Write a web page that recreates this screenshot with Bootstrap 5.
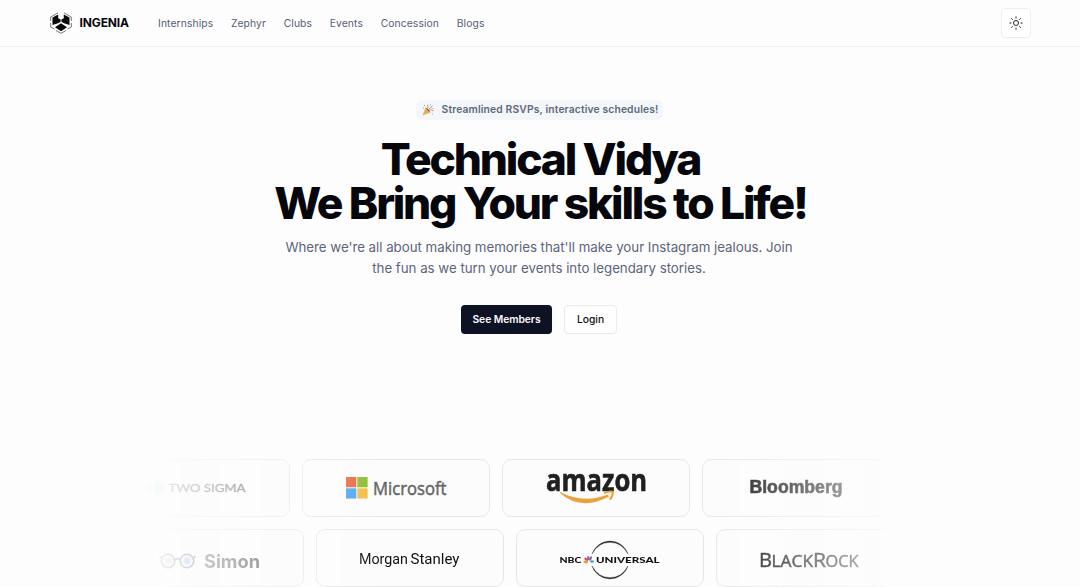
<!DOCTYPE html>
<html lang="en">
<head>
<meta charset="utf-8">
<meta name="viewport" content="width=device-width, initial-scale=1">
<title>Ingenia</title>
<link href="https://cdn.jsdelivr.net/npm/bootstrap@5.3.0/dist/css/bootstrap.min.css" rel="stylesheet">
<style>
body{font-family:Inter,sans-serif;background:#fdfdfe;color:#05070d;height:587px;overflow:hidden}
.topbar{height:47px;border-bottom:1px solid #f0f0f2;padding:0 49px 0 50px}
.brand-name{font-size:12px;font-weight:700;color:#05070d;margin-left:7.5px;width:78.5px;line-height:18px;letter-spacing:-.12px}
.menu{gap:17.7px}
.menu .nav-link{padding:0;font-size:10.3px;line-height:16px;color:#565e76;letter-spacing:.11px}
.theme-btn{width:30px;height:30px;border:1px solid #ededf0;border-radius:5px;background:#fff;padding:0}
.hero{padding-top:53px}
.pill{height:20px;border-radius:6px;background:#f3f6fa;color:#5f6979;font-size:10.3px;font-weight:600;padding:0 5px 0 6px;letter-spacing:.14px;margin-right:1px}
.headline{font-size:44.4px;line-height:44.4px;font-weight:800;letter-spacing:-2.2px;margin:17px 0 0 1px}
.sub{font-size:13.3px;line-height:20.7px;color:#5d657a;margin:11px 2px 0 0;letter-spacing:-.02px}
.actions{gap:12px;margin-top:27px;margin-right:2px}
.actions .btn{height:29px;font-size:10.3px;line-height:16px;font-weight:500;border-radius:4px;padding:5px 0}
.actions .btn-main{width:91px;background:#0d1224;color:#fafafc;font-weight:600;letter-spacing:-.05px}
.actions .btn-line{width:53px;border:1px solid #ebebef;background:#fefefe;color:#111}
.logos{width:800px;margin:125px auto 0;overflow:hidden;-webkit-mask-image:linear-gradient(90deg,transparent,#000 30%,#000 70%,rgba(0,0,0,.32) 91%,transparent 94%);mask-image:linear-gradient(90deg,transparent,#000 30%,#000 70%,rgba(0,0,0,.32) 91%,transparent 94%)}
.track{gap:12px}
.track-one{margin-left:-38.5px}
.track-two{margin-left:-24px;margin-top:12px}
.tile{flex:0 0 188px;height:58px;border:1px solid #e7e7ea;border-radius:9px;background:#fcfcfc}
.tile svg{display:block;width:100%;height:56px}
</style>
<script src="https://cdn.jsdelivr.net/npm/bootstrap@5.3.0/dist/js/bootstrap.bundle.min.js"></script>
</head>
<body>
<header class="topbar d-flex align-items-center">
  <a href="#" class="d-flex align-items-center text-decoration-none">
    <svg width="22" height="22" viewBox="0 0 22 22"><path d="M2.5 5.4 8.2 2.5V6.2L10.6 7.5V9.7L8 11.2 2.5 13ZM19.5 5.4 13.8 2.5V6.2L11.4 7.5V9.7L14 11.2 19.5 13ZM5 15.2l6-4 6 4-6 4z" fill="#0a0a0a"/><path d="M.7 9V5L8 .8M21.3 9V5L14 .8M.7 11v4l3.8 2M21.3 11v4l-3.8 2M6 18.5l5 2.8 5-2.8" fill="none" stroke="#555" stroke-width=".8"/></svg>
    <span class="brand-name">INGENIA</span>
  </a>
  <nav class="menu nav flex-nowrap">
    <a class="nav-link" href="#">Internships</a><a class="nav-link" href="#">Zephyr</a><a class="nav-link" href="#">Clubs</a><a class="nav-link" href="#">Events</a><a class="nav-link" href="#">Concession</a><a class="nav-link" href="#">Blogs</a>
  </nav>
  <button class="theme-btn btn d-flex align-items-center justify-content-center ms-auto" aria-label="Theme">
    <svg width="14" height="14" viewBox="0 0 14 14" fill="none" stroke="#222" stroke-width="1"><circle cx="7" cy="7" r="2.5"/><path d="M7 .4v2M7 11.6v2M.4 7h2M11.6 7h2M2.3 2.3l1.4 1.4M10.3 10.3l1.4 1.4M2.3 11.7l1.4-1.4M10.3 3.7l1.4-1.4"/></svg>
  </button>
</header>
<main>
  <section class="hero d-flex flex-column align-items-center text-center">
    <div class="pill d-flex align-items-center">
      <svg class="me-2" width="12" height="12" viewBox="0 0 12 12"><path d="M.5 11.5 3.5 3.5 8.5 8.5Z" fill="#e9ae50"/><path d="M3.5 3.5q3 1 5 5-3-1-5-5" fill="#8b5b35"/><path d="M5 5Q7 3 5.5.8M7 6.5Q9 4.5 11.5 7" fill="none" stroke="#c79a5c"/><path d="M6.5 5.5 10.5 2" stroke="#6f9ac7"/><path d="M2 1.5h1M8 1h1M10.5 4.5h1M10 10h1M1 4h1" stroke="#d29855"/></svg>
      <span>Streamlined RSVPs, interactive schedules!</span>
    </div>
    <h1 class="headline">Technical Vidya<br>We Bring Your skills to Life!</h1>
    <p class="sub">Where we're all about making memories that'll make your Instagram jealous. Join<br>the fun as we turn your events into legendary stories.</p>
    <div class="actions d-flex"><a class="btn btn-main" href="#">See Members</a><a class="btn btn-line" href="#">Login</a></div>
  </section>
  <section class="logos">
    <div class="track track-one d-flex">
      <div class="tile"><svg viewBox="0 0 186 56"><path d="m53 19 9 9-9 9-9-9z" fill="#a8d8d0"/><text x="65.5" y="32" font-family="Lato" font-size="12" fill="#444" stroke="#444" stroke-width=".3" textLength="77" lengthAdjust="spacingAndGlyphs">TWO SIGMA</text></svg></div>
      <div class="tile"><svg viewBox="0 0 186 56"><path d="M43 17h10.3v10.3H43z" fill="#e86740"/><path d="M54.3 17h10.3v10.3H54.3z" fill="#8fbc30"/><path d="M43 28.3h10.3v10.3H43z" fill="#49a5ed"/><path d="M54.3 28.3h10.3v10.3H54.3z" fill="#f4bd42"/><text x="70" y="34.5" font-family="Open Sans" font-size="17.5" fill="#666" stroke="#666" stroke-width=".5" textLength="73.5" lengthAdjust="spacingAndGlyphs">Microsoft</text></svg></div>
      <div class="tile"><svg viewBox="0 0 186 56"><text x="43" y="30.5" font-family="Open Sans" font-size="30" font-weight="700" fill="#202020" stroke="#202020" stroke-width=".6" textLength="101" lengthAdjust="spacingAndGlyphs">amazon</text><path d="M57 32Q80 44 105 34.5L106 36.5Q78 51.5 57 33Z" fill="#eba13b"/><path d="M101 33q7-2.5 9-.8 0 3.5-3 7.3" fill="none" stroke="#eba13b" stroke-width="2.2"/></svg></div>
      <div class="tile"><svg viewBox="0 0 186 56"><text x="46.5" y="33" font-family="Liberation Sans" font-size="19" font-weight="700" fill="#111" stroke="#111" stroke-width=".6" textLength="93" lengthAdjust="spacingAndGlyphs">Bloomberg</text></svg></div>
    </div>
    <div class="track track-two d-flex">
      <div class="tile"><svg viewBox="0 0 186 56"><g fill="#d4e4f2" stroke="#444" stroke-width="1.5"><circle cx="51" cy="31" r="6.8"/><circle cx="70" cy="31" r="6.8"/><path d="M58 29.5q2.5-1.5 5 0M44.5 28l-2-2M76.5 28l2-2" fill="none"/></g><circle cx="51" cy="31" r="3" fill="#a9c6df"/><circle cx="70" cy="31" r="3" fill="#6e9fcb"/><text x="87" y="38" font-family="Inter" font-size="18.5" font-weight="700" fill="#444" textLength="56" lengthAdjust="spacingAndGlyphs">Simon</text></svg></div>
      <div class="tile"><svg viewBox="0 0 186 56"><text x="42" y="34" font-family="Roboto" font-size="15.5" fill="#111" textLength="49" lengthAdjust="spacingAndGlyphs">Morgan</text><text x="93.5" y="34" font-family="Roboto" font-size="15.5" fill="#111" textLength="49" lengthAdjust="spacingAndGlyphs">Stanley</text></svg></div>
      <div class="tile"><svg viewBox="0 0 186 56"><path d="M75 24A19 19 0 0 1 111 24Q105 12.5 93 12.3 81 12.5 75 24M75 36A19 19 0 0 0 111 36Q105 47.5 93 47.7 81 47.5 75 36" fill="#222" stroke="#333" stroke-width=".4"/><text x="42.5" y="33" font-family="Lato" font-size="8.2" font-weight="900" fill="#111" textLength="22" lengthAdjust="spacingAndGlyphs">NBC</text><g><ellipse cx="68.8" cy="32" rx="2.4" ry="1.4" fill="#e8a33b"/><ellipse cx="69.3" cy="29.2" rx="2.3" ry="1.3" transform="rotate(35 69.3 29.2)" fill="#d95349"/><ellipse cx="71.3" cy="28" rx="1.2" ry="2" fill="#b75190"/><ellipse cx="73.5" cy="28.5" rx="1.2" ry="2.3" transform="rotate(30 73.5 28.5)" fill="#6574b7"/><ellipse cx="75" cy="31.5" rx="2" ry="1.3" fill="#519dcc"/></g><text x="79" y="33" font-family="Lato" font-size="8.2" font-weight="900" fill="#111" textLength="63.5" lengthAdjust="spacingAndGlyphs">UNIVERSAL</text></svg></div>
      <div class="tile"><svg viewBox="0 0 186 56"><g font-family="Open Sans" fill="#111" stroke="#111" stroke-width=".45"><text x="42" y="37" font-size="20" textLength="13" lengthAdjust="spacingAndGlyphs">B</text><text x="54.5" y="37" font-size="16" textLength="41.5" lengthAdjust="spacingAndGlyphs">LACK</text><text x="96" y="37" font-size="20" textLength="13" lengthAdjust="spacingAndGlyphs">R</text><text x="108.5" y="37" font-size="16" textLength="33" lengthAdjust="spacingAndGlyphs">OCK</text></g></svg></div>
    </div>
  </section>
</main>
</body>
</html>
